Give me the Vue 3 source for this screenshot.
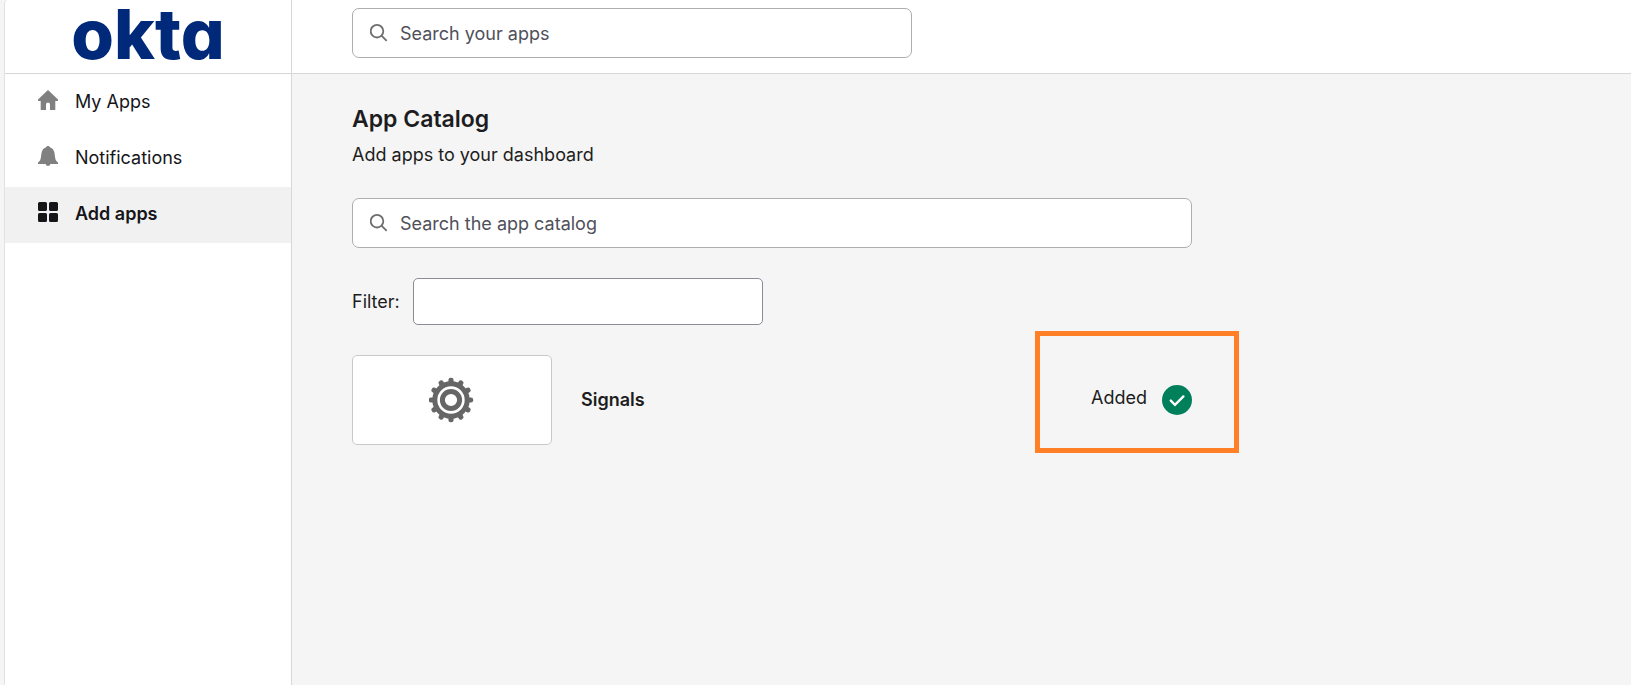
<template>
  <div class="dashboard">
    <aside class="sidebar">
      <a class="brand" href="#">okta</a>
      <nav class="nav">
        <a
          v-for="item in navItems"
          :key="item.id"
          href="#"
          class="nav-item"
          :class="{ active: item.id === current }"
          @click.prevent="current = item.id"
        >
          <svg class="nav-icon" viewBox="0 0 20 20" aria-hidden="true">
            <path :d="item.icon" />
          </svg>
          <span>{{ item.label }}</span>
        </a>
      </nav>
    </aside>

    <div class="page">
      <header class="topbar">
        <label class="search search-apps">
          <svg class="search-icon" viewBox="0 0 18 18" aria-hidden="true">
            <circle cx="7" cy="7.2" r="6.3" />
            <path d="M11.500 11.700l5.200 5.200" />
          </svg>
          <input v-model="appQuery" type="text" placeholder="Search your apps" aria-label="Search your apps">
        </label>
      </header>

      <main class="content">
        <h1>App Catalog</h1>
        <p class="subtitle">Add apps to your dashboard</p>

        <label class="search">
          <svg class="search-icon" viewBox="0 0 18 18" aria-hidden="true">
            <circle cx="7" cy="7.2" r="6.3" />
            <path d="M11.500 11.700l5.200 5.200" />
          </svg>
          <input v-model="catalogQuery" type="text" placeholder="Search the app catalog" aria-label="Search the app catalog">
        </label>

        <div class="filter">
          <label for="filter">Filter:</label>
          <input id="filter" v-model="filter" type="text">
        </div>

        <div class="app-row">
          <div class="app-logo">
            <svg viewBox="0 0 46 46" aria-hidden="true">
              <g fill="#666">
                <rect
                  v-for="n in 12"
                  :key="n"
                  x="19.4"
                  y="0.8"
                  width="5.2"
                  height="8"
                  rx="2.3"
                  :transform="`rotate(${n * 30} 22 23)`"
                />
              </g>
              <circle cx="22" cy="23" r="16.2" fill="none" stroke="#666" stroke-width="5" />
              <circle cx="22" cy="23" r="8.6" fill="none" stroke="#666" stroke-width="5" />
            </svg>
          </div>
          <h2>Signals</h2>
          <div class="status">
            <span>Added</span>
            <svg class="check" viewBox="0 0 30 30" aria-hidden="true">
              <circle cx="15" cy="15" r="15" fill="#00805a" />
              <path d="M8.800 15.600l4.200 4.200 8.400-8.400" />
            </svg>
            <div class="highlight"></div>
          </div>
        </div>
      </main>
    </div>
  </div>
</template>

<script setup>
import { ref } from 'vue';

const current = ref('add');
const appQuery = ref('');
const catalogQuery = ref('');
const filter = ref('');

const navItems = [
  {
    id: 'apps',
    label: 'My Apps',
    icon: 'M10 0L20 9.6V11H17.3V20H12V14.5a2 2 0 0 0-4 0V20H2.7V11H0V9.6z'
  },
  {
    id: 'notifications',
    label: 'Notifications',
    icon: 'M10 0c1 0 1.8.6 2.2 1.5 2.4.8 3.9 2.9 4.3 5.5l.7 5c.3 2 1 3.1 2.8 4.6V18h-7.6c-.3 1.2-1.2 2-2.4 2s-2.1-.8-2.4-2H0v-1.4C1.8 15.1 2.5 14 2.8 12l.7-5c.4-2.6 1.9-4.7 4.3-5.5C8.2.6 9 0 10 0z'
  },
  {
    id: 'add',
    label: 'Add apps',
    icon: 'M1.5 0h6A1.5 1.5 0 0 1 9 1.5v6A1.5 1.5 0 0 1 7.5 9h-6A1.5 1.5 0 0 1 0 7.5v-6A1.5 1.5 0 0 1 1.5 0zM12.5 0h6A1.5 1.5 0 0 1 20 1.5v6A1.5 1.5 0 0 1 18.5 9h-6A1.5 1.5 0 0 1 11 7.5v-6A1.5 1.5 0 0 1 12.5 0zM1.5 11h6A1.5 1.5 0 0 1 9 12.5v6A1.5 1.5 0 0 1 7.5 20h-6A1.5 1.5 0 0 1 0 18.5v-6A1.5 1.5 0 0 1 1.5 11zM12.5 11h6a1.5 1.5 0 0 1 1.5 1.5v6a1.5 1.5 0 0 1-1.5 1.5h-6a1.5 1.5 0 0 1-1.5-1.5v-6a1.5 1.5 0 0 1 1.5-1.5z'
  }
];
</script>

<style>
body {
  margin: 0;
  background: #f5f5f5;
}
</style>

<style scoped>
.dashboard {
  display: flex;
  min-height: 100vh;
  box-sizing: border-box;
  padding-left: 4px;
  background: #f5f5f5;
  color: #1d1d21;
  font-family: Inter, "Liberation Sans", sans-serif;
  font-size: 18px;
  line-height: 24px;
}

/* Sidebar */
.sidebar {
  flex: none;
  width: 286px;
  background: #fff;
  border-left: 1px solid #e2e2e2;
  border-right: 1px solid #d7d7dc;
  border-top-left-radius: 4px;
}

.brand {
  display: flex;
  align-items: flex-start;
  justify-content: center;
  height: 73px;
  border-bottom: 1px solid #d7d7d7;
  color: #00297a;
  font-size: 69px;
  font-weight: 800;
  font-feature-settings: "cv11";
  line-height: 68px;
  text-decoration: none;
}

.nav {
  padding-top: 1px;
}

.nav-item {
  display: flex;
  align-items: flex-start;
  gap: 17px;
  height: 56px;
  box-sizing: border-box;
  padding: 15px 33px;
  color: #16161a;
  text-decoration: none;
}

.nav-item.active {
  background: #f1f1f1;
  font-weight: 600;
}

.nav-icon {
  flex: none;
  width: 20px;
  height: 20px;
  fill: #808080;
}

.nav-item.active .nav-icon {
  fill: #16161a;
}

/* Page */
.page {
  flex: 1;
  min-width: 0;
}

.topbar {
  display: flex;
  align-items: flex-start;
  height: 73px;
  padding: 0 60px;
  background: #fff;
  border-bottom: 1px solid #d7d7d7;
}

.search {
  display: flex;
  align-items: center;
  gap: 12px;
  height: 50px;
  box-sizing: border-box;
  padding: 0 17px;
  background: #fff;
  border: 1px solid #aeaeae;
  border-radius: 7px;
}

.search-apps {
  width: 100%;
  max-width: 560px;
  margin-top: 8px;
}

.search-icon {
  flex: none;
  width: 18px;
  height: 18px;
  fill: none;
  stroke: #6e6e6e;
  stroke-width: 1.8;
}

.search input {
  flex: 1;
  min-width: 0;
  padding: 2px 0 0;
  border: 0;
  outline: 0;
  background: transparent;
  color: inherit;
  font: inherit;
}

.search input::placeholder {
  color: #50505a;
  opacity: 1;
}

.content {
  max-width: 840px;
  padding: 29px 60px;
}

h1 {
  margin: 0 0 8px;
  font-size: 23px;
  font-weight: 600;
  line-height: 32px;
}

.subtitle {
  margin: 0 0 31px;
}

.filter {
  display: flex;
  align-items: center;
  gap: 13px;
  margin: 30px 0;
}

.filter input {
  width: 350px;
  height: 47px;
  box-sizing: border-box;
  padding: 0 12px;
  background: #fff;
  border: 1px solid #8c8c96;
  border-radius: 5px;
  font: inherit;
}

/* App row */
.app-row {
  display: flex;
  align-items: center;
  gap: 29px;
}

.app-logo {
  display: flex;
  align-items: center;
  justify-content: center;
  width: 200px;
  height: 90px;
  box-sizing: border-box;
  background: #fff;
  border: 1px solid #c9c9c9;
  border-radius: 5px;
}

.app-logo svg {
  width: 46px;
  height: 46px;
}

h2 {
  margin: 0;
  font-size: 18px;
  font-weight: 600;
  line-height: 24px;
}

.status {
  position: relative;
  display: flex;
  align-items: flex-start;
  gap: 15px;
  margin-left: auto;
  line-height: 26px;
}

.check {
  width: 30px;
  height: 30px;
}

.check path {
  fill: none;
  stroke: #fff;
  stroke-width: 2.4;
  stroke-linecap: round;
}

/* Marker drawn over the status */
.highlight {
  position: absolute;
  inset: -54px -47px -38px -56px;
  border: 5px solid #ff8027;
  pointer-events: none;
}
</style>
